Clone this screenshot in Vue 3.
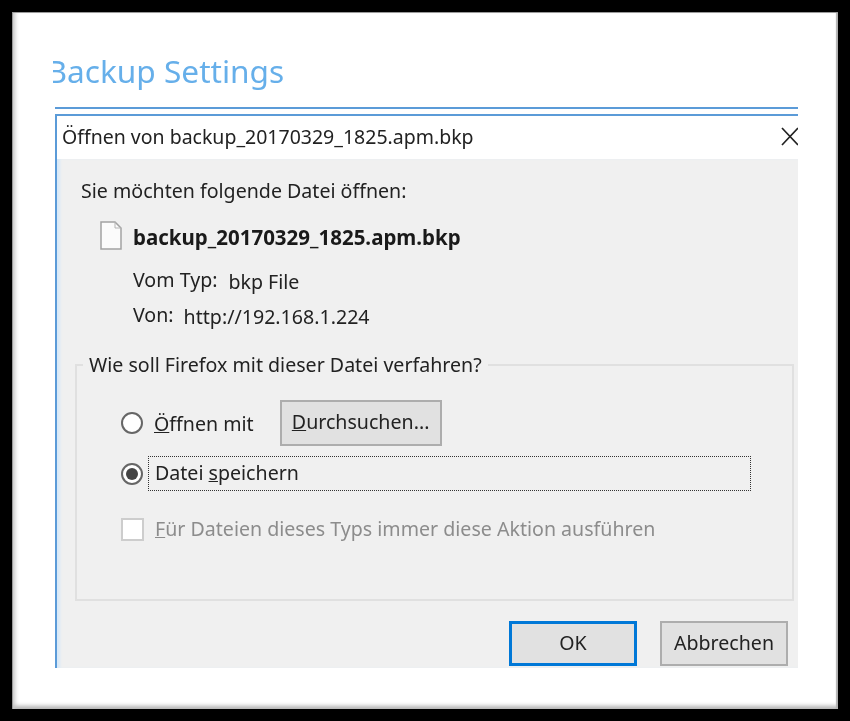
<script setup>
const title = 'backup_20170329_1825.apm.bkp'
</script>

<template>
  <main class="page">
    <section class="panel">
      <h1 class="heading"><span>Backup Settings</span></h1>
      <div class="rule"></div>
      <div class="dialog">
        <header class="bar">
          <span>Öffnen von {{ title }}</span>
          <svg class="close" width="18" height="19" viewBox="0 0 18 19" aria-hidden="true">
            <path d="M1 1 L17 18 M17 1 L1 18" stroke="#222" stroke-width="1.7" fill="none" />
          </svg>
        </header>
        <div class="body">
          <p class="intro">Sie möchten folgende Datei öffnen:</p>
          <div class="file">
            <svg width="22" height="29" viewBox="0 0 22 29" aria-hidden="true">
              <path d="M1 1 H15 L21 7 V28 H1 Z" fill="#fbfbfb" stroke="#a2a2a2" stroke-width="1.5" />
              <path d="M15 1 V7 H21" fill="none" stroke="#b5b5b5" />
            </svg>
            <strong>{{ title }}</strong>
          </div>
          <div class="meta type"><span>Vom Typ:</span><span class="value">bkp File</span></div>
          <div class="meta from"><span>Von:</span><span class="value">http://192.168.1.224</span></div>
          <fieldset class="group">
            <legend>Wie soll Firefox mit dieser Datei verfahren?</legend>
            <div class="row open">
              <span class="radio"></span>
              <span class="label"><u>Ö</u>ffnen mit</span>
              <span class="btn browse"><u>D</u>urchsuchen...</span>
            </div>
            <div class="row save">
              <span class="radio on"></span>
              <span class="focus">Datei <u>s</u>peichern</span>
            </div>
            <div class="row always">
              <span class="check"></span>
              <span class="label"><u>F</u>ür Dateien dieses Typs immer diese Aktion ausführen</span>
            </div>
          </fieldset>
          <div class="actions">
            <span class="btn ok">OK</span>
            <span class="btn cancel">Abbrechen</span>
          </div>
        </div>
      </div>
    </section>
  </main>
</template>

<style scoped>
.page {
  width: 850px;
  height: 721px;
  box-sizing: border-box;
  padding: 12px;
  background: #000;
  overflow: hidden;
  font-family: "Noto Sans", "Open Sans", sans-serif;
  color: #222;
}
.panel {
  width: 826px;
  height: 697px;
  box-sizing: border-box;
  padding: 0 40px 0 43px;
  background: #fff;
  box-shadow: inset 1px 1px 0 #9a9a9a, inset 5px 0 4px -2px #c4c4c4, inset -3px 0 1px -1px #b0b0b0, inset 0 -5px 4px -2px #b0b0b0;
  filter: blur(0.6px);
  display: flex;
  flex-direction: column;
}
.heading {
  margin: 0 0 0 -2px;
  height: 95px;
  box-sizing: border-box;
  padding-top: 37px;
  width: 400px;
  overflow: hidden;
  font-size: 31.6px;
  line-height: 44px;
  font-weight: 400;
  color: #66afea;
}
.heading span {
  display: block;
  margin-left: -6.5px;
}
.rule {
  height: 2px;
  width: 743px;
  background: #5b9bd8;
  flex: none;
}
.dialog {
  margin-top: 5px;
  width: 743px;
  height: 554px;
  box-sizing: border-box;
  border-top: 2px solid #5b9bd8;
  border-left: 2px solid #5b9bd8;
  display: flex;
  flex-direction: column;
  overflow: hidden;
}
.bar {
  height: 43px;
  flex: none;
  display: flex;
  align-items: center;
  justify-content: space-between;
  padding: 0 0 3px 5px;
  box-sizing: border-box;
  background: #fff;
  font-size: 19.5px;
}
.close {
  margin-right: -1px;
}
.body {
  flex: 1;
  background: #f0f0f0;
  padding-left: 18px;
  position: relative;
  font-size: 19.6px;
  box-shadow: inset 4px 0 3px -1px #d8e9f8;
}
.intro {
  margin: 0;
  padding: 19px 0 0 6px;
  line-height: 26px;
}
.file {
  margin: 17px 0 0 25px;
  display: flex;
  align-items: center;
  gap: 11px;
  height: 29px;
  font-size: 20.5px;
}
.file strong {
  font-weight: 700;
  color: #1a1a1a;
  padding-top: 3px;
}
.meta {
  margin-left: 58px;
  display: flex;
  line-height: 26px;
}
.type {
  margin-top: 17px;
  gap: 11px;
}
.from {
  margin-top: 9px;
  gap: 10px;
}
.meta .value {
  position: relative;
  top: 2px;
}
.group {
  margin: 24px 0 0 0;
  padding: 0;
  width: 719px;
  height: 249px;
  box-sizing: border-box;
  border: 2px solid #e0e0e0;
  min-inline-size: 0;
}
.group legend {
  margin-left: 6px;
  padding: 0 6px;
  font-size: 19.6px;
  line-height: 26px;
}
.row {
  display: flex;
  align-items: center;
  margin-left: 44px;
}
.open {
  margin-top: 22px;
  height: 46px;
}
.save {
  margin-top: 10px;
  height: 35px;
}
.always {
  margin-top: 27px;
  height: 23px;
  color: #8c8c8c;
}
.always .label {
  padding-bottom: 2px;
}
.radio {
  width: 22px;
  height: 22px;
  box-sizing: border-box;
  border: 2px solid #666;
  border-radius: 50%;
  background: #fff;
  flex: none;
  position: relative;
}
.radio.on::after {
  content: "";
  position: absolute;
  inset: 3px;
  border-radius: 50%;
  background: #444;
}
.check {
  width: 23px;
  height: 23px;
  box-sizing: border-box;
  border: 2px solid #cdcdcd;
  background: #fff;
  flex: none;
}
.label {
  margin-left: 11px;
}
.focus {
  margin-left: 5px;
  width: 603px;
  height: 35px;
  box-sizing: border-box;
  border: 1px dotted #333;
  padding-left: 6px;
  line-height: 32px;
}
.btn {
  display: flex;
  align-items: center;
  justify-content: center;
  box-sizing: border-box;
  background: #e1e1e1;
  border: 2px solid #adadad;
  color: #222;
}
.browse {
  margin-left: 26px;
  width: 162px;
  height: 46px;
  padding-bottom: 3px;
}
.actions {
  position: absolute;
  top: 462px;
  left: 452px;
  display: flex;
  gap: 23px;
}
.ok,
.cancel {
  width: 128px;
  height: 45px;
  padding-bottom: 2px;
}
.ok {
  border: 3px solid #0078d7;
}
</style>

<style>
html, body { margin: 0; background: #000; }
</style>
